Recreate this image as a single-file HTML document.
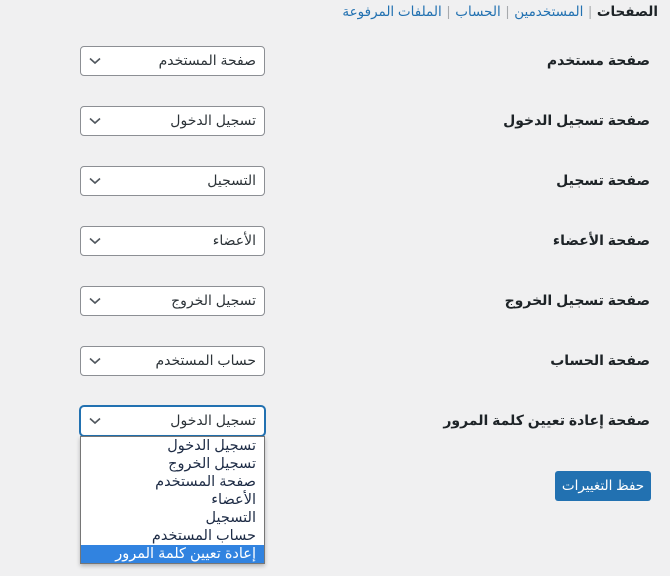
<!DOCTYPE html>
<html dir="rtl"><head><meta charset="utf-8"><style>
body{margin:0;width:670px;height:576px;background:#f0f0f1;font-family:"Liberation Sans","DejaVu Sans","Noto Sans CJK SC",sans-serif;position:relative;overflow:hidden;color:#1d2327}
.nav{position:absolute;right:12px;top:4px;font-size:13.5px;color:#2271b1;white-space:nowrap}
.nav b{color:#1d2327}
.nav .s{color:#a7aaad;margin:0 5px}
.lbl{position:absolute;right:20px;font-size:14px;font-weight:bold;color:#1d2327;white-space:nowrap}
.sel{position:absolute;left:80px;width:183px;height:28px;border:1px solid #8c8f94;border-radius:4px;background:#fff;font-size:14px;color:#2c3338;box-sizing:content-box}
.sel span{position:absolute;right:8px;top:5px;white-space:nowrap}
.sel svg{position:absolute;left:8px;top:10px}
.sel.f{border-color:#2271b1;box-shadow:0 0 0 1px #2271b1}
.list{position:absolute;left:80px;top:436px;width:185px;height:128px;background:#fff;border:1px solid #767676;box-sizing:border-box;font-size:14.5px;color:#1d2b45;box-shadow:0 2px 4px rgba(0,0,0,.25)}
.list div{height:18px;line-height:18px;padding-right:8px;white-space:nowrap}
.list .h{background:#3183e0;color:#fff}
.btn{position:absolute;left:555px;top:471px;width:96px;height:30px;background:#2271b1;border-radius:3px;color:#fff;font-size:13.5px;text-align:center;line-height:30px}
</style></head><body>
<div class="nav"><b>الصفحات</b><span class="s">|</span>المستخدمين<span class="s">|</span>الحساب<span class="s">|</span>الملفات المرفوعة</div>

<div class="lbl" style="top:52px">صفحة مستخدم</div>
<div class="sel" style="top:46px"><span>صفحة المستخدم</span><svg width="12" height="8" viewBox="0 0 12 8"><path d="M1 1.5l5 4.5 5-4.5" fill="none" stroke="#50575e" stroke-width="1.6"/></svg></div>

<div class="lbl" style="top:112px">صفحة تسجيل الدخول</div>
<div class="sel" style="top:106px"><span>تسجيل الدخول</span><svg width="12" height="8" viewBox="0 0 12 8"><path d="M1 1.5l5 4.5 5-4.5" fill="none" stroke="#50575e" stroke-width="1.6"/></svg></div>

<div class="lbl" style="top:172px">صفحة تسجيل</div>
<div class="sel" style="top:166px"><span>التسجيل</span><svg width="12" height="8" viewBox="0 0 12 8"><path d="M1 1.5l5 4.5 5-4.5" fill="none" stroke="#50575e" stroke-width="1.6"/></svg></div>

<div class="lbl" style="top:232px">صفحة الأعضاء</div>
<div class="sel" style="top:226px"><span>الأعضاء</span><svg width="12" height="8" viewBox="0 0 12 8"><path d="M1 1.5l5 4.5 5-4.5" fill="none" stroke="#50575e" stroke-width="1.6"/></svg></div>

<div class="lbl" style="top:292px">صفحة تسجيل الخروج</div>
<div class="sel" style="top:286px"><span>تسجيل الخروج</span><svg width="12" height="8" viewBox="0 0 12 8"><path d="M1 1.5l5 4.5 5-4.5" fill="none" stroke="#50575e" stroke-width="1.6"/></svg></div>

<div class="lbl" style="top:352px">صفحة الحساب</div>
<div class="sel" style="top:346px"><span>حساب المستخدم</span><svg width="12" height="8" viewBox="0 0 12 8"><path d="M1 1.5l5 4.5 5-4.5" fill="none" stroke="#50575e" stroke-width="1.6"/></svg></div>

<div class="lbl" style="top:412px">صفحة إعادة تعيين كلمة المرور</div>
<div class="sel f" style="top:406px"><span>تسجيل الدخول</span><svg width="12" height="8" viewBox="0 0 12 8"><path d="M1 1.5l5 4.5 5-4.5" fill="none" stroke="#50575e" stroke-width="1.6"/></svg></div>

<div class="list">
<div>تسجيل الدخول</div>
<div>تسجيل الخروج</div>
<div>صفحة المستخدم</div>
<div>الأعضاء</div>
<div>التسجيل</div>
<div>حساب المستخدم</div>
<div class="h">إعادة تعيين كلمة المرور</div>
</div>

<div class="btn">حفظ التغييرات</div>
</body></html>
